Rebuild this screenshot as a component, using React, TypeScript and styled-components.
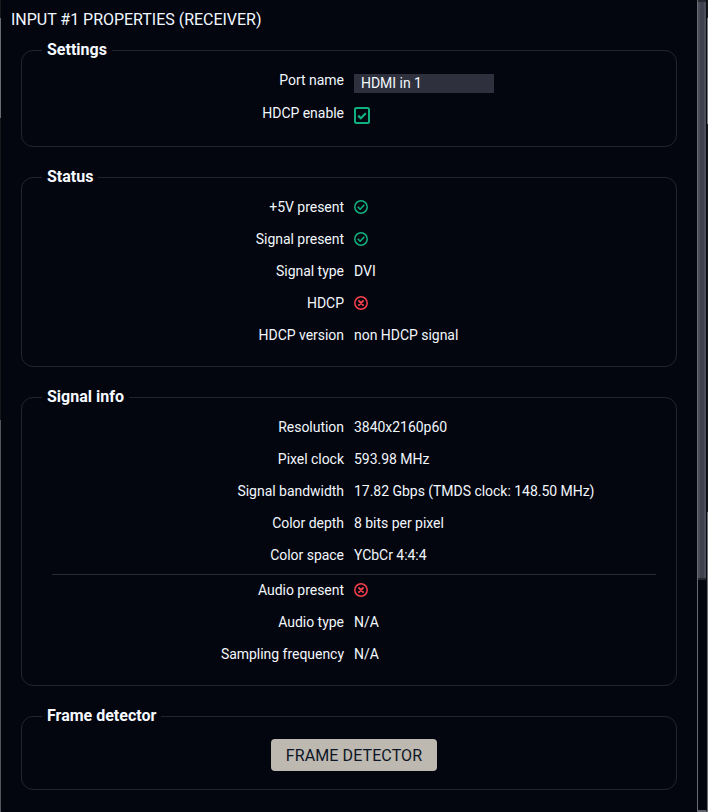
import { ReactElement } from 'react';
import styled, { createGlobalStyle } from 'styled-components';

const GlobalStyle = createGlobalStyle`
    html, body {
        margin: 0;
        padding: 0;
        background: #03050f;
    }
    body {
        font-family: Roboto, "Liberation Sans", sans-serif;
        overflow: hidden;
    }
`;

const Page = styled.div`
    display: flex;
    width: 708px;
    height: 812px;
    overflow: hidden;
    background: #03050f;
`;

const LeftEdge = styled.div`
    flex: 0 0 1px;
    background: linear-gradient(
        to bottom,
        #1a1a1e 0 18px,
        #6a6a70 18px 118px,
        #17171b 118px 420px,
        #55565c 420px 810px,
        #5f6069 810px
    );
`;

const RightEdge = styled.div`
    flex: 0 0 1px;
    background: linear-gradient(
        to bottom,
        #1a1a1e 0 18px,
        #77777f 18px 124px,
        #17171b 124px 512px,
        #6a6b74 512px
    );
`;

const Panel = styled.main`
    flex: 1;
    min-width: 0;
    padding: 10px 20px 0 10px;
    box-sizing: border-box;
`;

const Title = styled.h1`
    margin: 0 0 10px;
    font-size: 16px;
    font-weight: 400;
    line-height: 20px;
    letter-spacing: -0.02px;
    color: #f2f8ff;
`;

const Section = styled.fieldset<{ $pad: number }>`
    margin: 0 0 20px 10px;
    padding: 0 0 ${(p) => p.$pad}px;
    min-width: 0;
    border: 1px solid #23242f;
    border-radius: 12px;
`;

const Legend = styled.legend`
    margin-left: 20px;
    padding: 0 5px;
    font-size: 16px;
    font-weight: 700;
    line-height: 20px;
    color: #f6faff;
`;

const Rows = styled.div`
    display: flex;
    flex-direction: column;
    padding-top: 4px;
`;

const Row = styled.div<{ $height?: number; $top?: number }>`
    display: grid;
    grid-template-columns: 322px 1fr;
    column-gap: 10px;
    align-items: center;
    height: ${(p) => p.$height ?? 32}px;
    margin-top: ${(p) => p.$top ?? 0}px;
    font-size: 14px;
    letter-spacing: -0.03px;
    color: #f2f7fc;
`;

const Label = styled.div`
    text-align: right;
`;

const Value = styled.div`
    display: flex;
    align-items: center;
`;

const PortInput = styled.input`
    box-sizing: border-box;
    width: 140px;
    height: 19px;
    margin: 8px 0 0;
    padding: 0 7px 2px;
    border: none;
    border-radius: 0;
    outline: none;
    background: #2e303d;
    font-family: inherit;
    font-size: 14px;
    letter-spacing: inherit;
    color: #f2f7fc;
`;

const Divider = styled.hr`
    flex: none;
    width: 604px;
    height: 1px;
    margin: 3px 0 -1px 30px;
    border: none;
    background: #2a2b36;
`;

const ButtonRow = styled.div`
    display: flex;
    justify-content: center;
    padding: 13px 0 0 10px;
`;

const DetectorButton = styled.button`
    width: 166px;
    height: 32px;
    padding: 0;
    border: none;
    border-radius: 4px;
    background: #bdb8b0;
    font-family: inherit;
    font-size: 16px;
    letter-spacing: 0.1px;
    color: #0c1626;
`;

const ScrollTrack = styled.div`
    flex: 0 0 8px;
    border-left: 1px solid #6a6b74;
    border-right: 1px solid #0a0b12;
    border-bottom: 2px solid #5f6069;
`;

const ScrollThumb = styled.div`
    height: 580px;
    box-sizing: border-box;
    border-top: 2px solid #26272f;
    border-bottom: 2px solid #26272f;
    background: linear-gradient(to right, #4b4d59 0 2px, #3f414f 2px 6px, #4b4d59 6px);
`;

const CheckIcon = styled.svg`
    display: block;
    color: #10b07f;
`;

const BoxIcon = styled(CheckIcon)`
    margin-top: 5px;
`;

const CrossIcon = styled.svg`
    display: block;
    color: #f5414c;
`;

function OkIcon(): ReactElement {
    return (
        <CheckIcon width="16" height="16" viewBox="0 0 16 16" fill="none" stroke="currentColor" strokeLinecap="round" strokeLinejoin="round">
            <circle cx="7" cy="8" r="6.2" strokeWidth="1.5" />
            <path d="M4.2 8.2l2 2 3.7-3.9" strokeWidth="1.6" />
        </CheckIcon>
    );
}

function ErrorIcon(): ReactElement {
    return (
        <CrossIcon width="16" height="16" viewBox="0 0 16 16" fill="none" stroke="currentColor" strokeLinecap="round">
            <circle cx="7" cy="8" r="6.2" strokeWidth="1.5" />
            <path d="M5 6l4 4M9 6l-4 4" strokeWidth="1.8" />
        </CrossIcon>
    );
}

function CheckedBox(): ReactElement {
    return (
        <BoxIcon width="16" height="17" viewBox="0 0 16 17" fill="none" stroke="currentColor">
            <rect x="1" y="1" width="14" height="15" rx="1.5" strokeWidth="2" />
            <path d="M4.2 8.6l2.6 2.6 5-5" strokeWidth="2.2" />
        </BoxIcon>
    );
}

export default function App(): ReactElement {
    return (
        <Page>
            <GlobalStyle />
            <LeftEdge />
            <Panel>
                <Title>INPUT #1 PROPERTIES (RECEIVER)</Title>

                <Section $pad={17}>
                    <Legend>Settings</Legend>
                    <Rows>
                        <Row $height={31}>
                            <Label>Port name</Label>
                            <Value><PortInput readOnly value="HDMI in 1" /></Value>
                        </Row>
                        <Row $top={2}>
                            <Label>HDCP enable</Label>
                            <Value><CheckedBox /></Value>
                        </Row>
                    </Rows>
                </Section>

                <Section $pad={15}>
                    <Legend>Status</Legend>
                    <Rows>
                        <Row><Label>+5V present</Label><Value><OkIcon /></Value></Row>
                        <Row><Label>Signal present</Label><Value><OkIcon /></Value></Row>
                        <Row><Label>Signal type</Label><Value>DVI</Value></Row>
                        <Row><Label>HDCP</Label><Value><ErrorIcon /></Value></Row>
                        <Row><Label>HDCP version</Label><Value>non HDCP signal</Value></Row>
                    </Rows>
                </Section>

                <Section $pad={15}>
                    <Legend>Signal info</Legend>
                    <Rows>
                        <Row><Label>Resolution</Label><Value>3840x2160p60</Value></Row>
                        <Row><Label>Pixel clock</Label><Value>593.98 MHz</Value></Row>
                        <Row><Label>Signal bandwidth</Label><Value>17.82 Gbps (TMDS clock: 148.50 MHz)</Value></Row>
                        <Row><Label>Color depth</Label><Value>8 bits per pixel</Value></Row>
                        <Row><Label>Color space</Label><Value>YCbCr 4:4:4</Value></Row>
                        <Divider />
                        <Row><Label>Audio present</Label><Value><ErrorIcon /></Value></Row>
                        <Row><Label>Audio type</Label><Value>N/A</Value></Row>
                        <Row><Label>Sampling frequency</Label><Value>N/A</Value></Row>
                    </Rows>
                </Section>

                <Section $pad={18}>
                    <Legend>Frame detector</Legend>
                    <ButtonRow>
                        <DetectorButton>FRAME DETECTOR</DetectorButton>
                    </ButtonRow>
                </Section>
            </Panel>
            <ScrollTrack>
                <ScrollThumb />
            </ScrollTrack>
            <RightEdge />
        </Page>
    );
}
